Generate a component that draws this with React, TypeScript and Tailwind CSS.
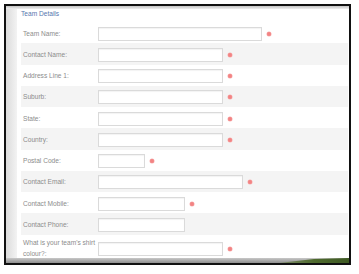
import React from "react";

interface Field {
  label: React.ReactNode;
  width: string;
  required: boolean;
}

const fields: Field[] = [
  { label: "Team Name:", width: "w-[164px]", required: true },
  { label: "Contact Name:", width: "w-[125px]", required: true },
  { label: "Address Line 1:", width: "w-[125px]", required: true },
  { label: "Suburb:", width: "w-[125px]", required: true },
  { label: "State:", width: "w-[125px]", required: true },
  { label: "Country:", width: "w-[125px]", required: true },
  { label: "Postal Code:", width: "w-[47px]", required: true },
  { label: "Contact Email:", width: "w-[145px]", required: true },
  { label: "Contact Mobile:", width: "w-[87px]", required: true },
  { label: "Contact Phone:", width: "w-[87px]", required: false },
];

const Dot = ({ className = "" }: { className?: string }) => (
  <span
    className={`ml-[5px] w-[4px] h-[4px] rounded-full bg-[#f28383] shadow-[0_0_0_0.5px_#f7b0b0] ${className}`}
  />
);

const Row = ({ field, shaded }: { field: Field; shaded: boolean }) => (
  <div
    className={`h-[21.25px] flex items-center pt-[2px] pl-[2px] ${
      shaded ? "bg-[#f4f4f4]" : "bg-white"
    }`}
  >
    <label className="w-[75px] text-[6.6px] leading-[10px] text-[#8c8c8c]">
      {field.label}
    </label>
    <input
      type="text"
      className={`${field.width} h-[14px] bg-white border border-[#dadada] shadow-[inset_0_1px_1px_rgba(0,0,0,0.05)] outline-none`}
    />
    {field.required && <Dot />}
  </div>
);

export default function App() {
  return (
    <div className="w-[359px] h-[274px] bg-white overflow-hidden pt-[4px] pl-[4px] font-['Liberation_Sans',Arial,sans-serif]">
      <div className="w-[347px] h-[261px] border-2 border-[#111] flex flex-col">
        {/* top shadow */}
        <div className="h-[3px] bg-gradient-to-b from-[#c4c4c4] to-[#efefef]" />
        <div className="flex-1 flex min-h-0">
          <div className="w-[11px] bg-gradient-to-r from-[#dcdcdc] to-[#f3f3f3]" />
          <div className="flex-1 flex flex-col min-h-0 bg-white pl-[4px] pr-[1px]">
            <div className="h-[13px] flex items-end pb-[3px] text-[6.6px] text-[#5676ae]">
              Team Details
            </div>
            <div className="flex-1 overflow-hidden">
              {fields.map((f, i) => (
                <Row key={i} field={f} shaded={i % 2 === 1} />
              ))}
              <div className="flex items-start pt-[3.5px] pl-[2px] bg-white">
                <label className="w-[75px] text-[6.6px] leading-[10.5px] text-[#8c8c8c]">
                  What is your team's shirt
                  <br />
                  colour?:
                </label>
                <input
                  type="text"
                  className="mt-[4px] w-[125px] h-[14px] bg-white border border-[#dadada] shadow-[inset_0_1px_1px_rgba(0,0,0,0.05)] outline-none"
                />
                <Dot className="mt-[9px]" />
              </div>
            </div>
          </div>
        </div>
        {/* bottom shadow with background peeking through */}
        <div className="h-[5px] relative bg-gradient-to-b from-[#c8c8c8] to-[#8f8f8f]">
          <svg
            className="absolute right-0 top-0"
            width="70"
            height="5"
            viewBox="0 0 70 5"
            preserveAspectRatio="none"
          >
            <defs>
              <linearGradient id="grass" x1="0" y1="0" x2="1" y2="0">
                <stop offset="0" stopColor="#7d8a6a" />
                <stop offset="0.5" stopColor="#4f6b2e" />
                <stop offset="1" stopColor="#3f5a24" />
              </linearGradient>
            </defs>
            <polygon points="0,5 35,1 70,0 70,5" fill="url(#grass)" />
          </svg>
        </div>
      </div>
    </div>
  );
}
